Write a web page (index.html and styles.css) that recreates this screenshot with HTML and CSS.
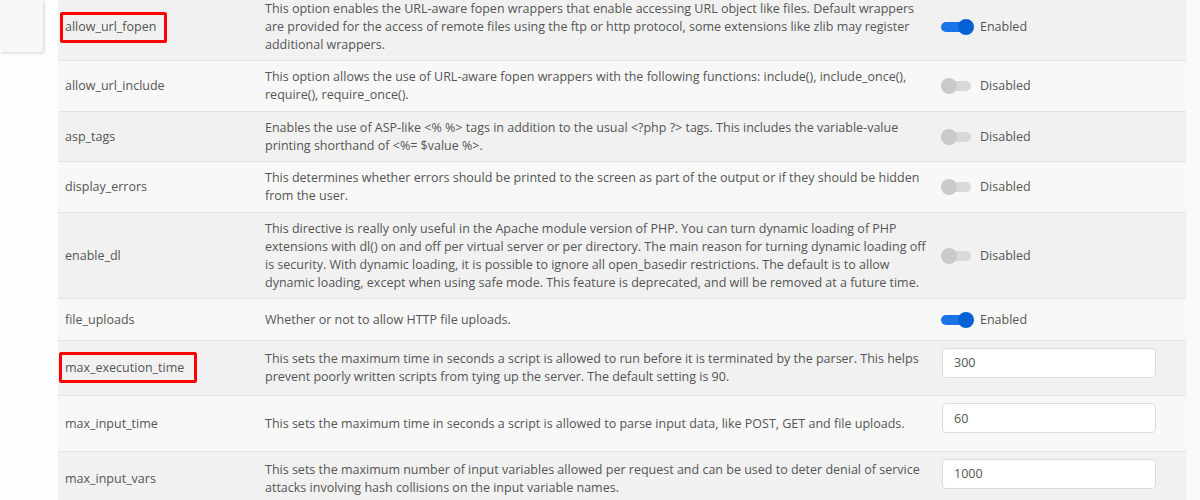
FILE: index.html
```html
<!DOCTYPE html>
<html lang="en">
<head>
<meta charset="utf-8">
<title>PHP Options</title>
<link rel="stylesheet" href="styles.css">
</head>
<body>
<div class="page">
  <aside class="side">
    <div class="side-card"></div>
  </aside>
  <main class="main">
    <table class="opts">
      <tbody>
        <tr class="odd">
          <td class="name"><span class="mark mark-a">allow_url_fopen</span></td>
          <td class="desc">This option enables the URL-aware fopen wrappers that enable accessing URL object like files. Default wrappers are provided for the access of remote files using the ftp or http protocol, some extensions like zlib may register additional wrappers.</td>
          <td class="ctl"><label class="sw on"><span class="track"><span class="knob"></span></span><span class="sw-text">Enabled</span></label></td>
        </tr>
        <tr>
          <td class="name">allow_url_include</td>
          <td class="desc">This option allows the use of URL-aware fopen wrappers with the following functions: include(), include_once(), require(), require_once().</td>
          <td class="ctl"><label class="sw"><span class="track"><span class="knob"></span></span><span class="sw-text">Disabled</span></label></td>
        </tr>
        <tr class="odd">
          <td class="name">asp_tags</td>
          <td class="desc">Enables the use of ASP-like &lt;% %&gt; tags in addition to the usual &lt;?php ?&gt; tags. This includes the variable-value printing shorthand of &lt;%= $value %&gt;.</td>
          <td class="ctl"><label class="sw"><span class="track"><span class="knob"></span></span><span class="sw-text">Disabled</span></label></td>
        </tr>
        <tr>
          <td class="name">display_errors</td>
          <td class="desc">This determines whether errors should be printed to the screen as part of the output or if they should be hidden from the user.</td>
          <td class="ctl"><label class="sw"><span class="track"><span class="knob"></span></span><span class="sw-text">Disabled</span></label></td>
        </tr>
        <tr class="odd">
          <td class="name">enable_dl</td>
          <td class="desc">This directive is really only useful in the Apache module version of PHP. You can turn dynamic loading of PHP extensions with dl() on and off per virtual server or per directory. The main reason for turning dynamic loading off is security. With dynamic loading, it is possible to ignore all open_basedir restrictions. The default is to allow dynamic loading, except when using safe mode. This feature is deprecated, and will be removed at a future time.</td>
          <td class="ctl"><label class="sw"><span class="track"><span class="knob"></span></span><span class="sw-text">Disabled</span></label></td>
        </tr>
        <tr>
          <td class="name">file_uploads</td>
          <td class="desc">Whether or not to allow HTTP file uploads.</td>
          <td class="ctl"><label class="sw on"><span class="track"><span class="knob"></span></span><span class="sw-text">Enabled</span></label></td>
        </tr>
        <tr class="odd">
          <td class="name"><span class="mark mark-b">max_execution_time</span></td>
          <td class="desc">This sets the maximum time in seconds a script is allowed to run before it is terminated by the parser. This helps prevent poorly written scripts from tying up the server. The default setting is 90.</td>
          <td class="ctl"><input class="field" type="text" value="300"></td>
        </tr>
        <tr>
          <td class="name">max_input_time</td>
          <td class="desc">This sets the maximum time in seconds a script is allowed to parse input data, like POST, GET and file uploads.</td>
          <td class="ctl"><input class="field" type="text" value="60"></td>
        </tr>
        <tr class="odd">
          <td class="name">max_input_vars</td>
          <td class="desc">This sets the maximum number of input variables allowed per request and can be used to deter denial of service attacks involving hash collisions on the input variable names.</td>
          <td class="ctl"><input class="field" type="text" value="1000"></td>
        </tr>
      </tbody>
    </table>
  </main>
  <div class="gutter"></div>
</div>
</body>
</html>
```

FILE: styles.css
```css
* { box-sizing: border-box; }
html, body { margin: 0; padding: 0; }
body {
  background: #fcfcfc;
  font-family: "Open Sans", "Liberation Sans", Arial, sans-serif;
  font-size: 12.5px;
  color: #555;
  overflow: hidden;
}
.page {
  display: grid;
  grid-template-columns: 58px 1128px 1fr;
  height: 500px;
}
.side {
  background: #fdfdfd;
}
.side-card {
  width: 43px;
  height: 52px;
  background: #f8f8f8;
  box-shadow: 1px 1px 3px rgba(0, 0, 0, 0.18);
  border-radius: 0 0 2px 0;
}
.main {
  margin-top: -7.5px;
}
.gutter {
  background: #fafafa;
}
.opts {
  width: 100%;
  border-collapse: collapse;
  table-layout: fixed;
}
.opts tr {
  background: #f8f8f8;
  border-bottom: 1px solid #e4e4e4;
}
.opts tr.odd {
  background: #f1f1f1;
}
.opts td {
  padding: 7px 7px 6.5px;
  line-height: 18px;
  vertical-align: middle;
}
.name { width: 200px; }
.desc { width: 676px; }
.ctl { width: 252px; }

.mark {
  position: relative;
  display: inline-block;
}
.mark::after {
  content: "";
  position: absolute;
  border: 3px solid #f00;
  border-radius: 2px;
}
.mark-a::after { left: -5px; right: -11px; top: -6px; bottom: -7px; }
.mark-b::after { left: -6px; right: -13px; top: -7px; bottom: -6px; }

.sw {
  display: flex;
  align-items: center;
  height: 27px;
}
.track {
  position: relative;
  width: 30px;
  height: 10px;
  border-radius: 5px;
  background: #d9d9d9;
}
.knob {
  position: absolute;
  top: 50%;
  left: 0;
  width: 16px;
  height: 16px;
  margin-top: -8px;
  border-radius: 50%;
  background: #cacaca;
}
.sw.on .track { background: #1a73e8; }
.sw.on .knob { left: auto; right: -3px; background: #0562d4; }
.sw-text { color: #555; margin-left: 9px; }

.field {
  display: block;
  width: 214px;
  height: 30px;
  margin: 0 0 11px 1px;
  padding: 0 11px;
  border: 1px solid #dcdcdc;
  border-radius: 4px;
  background: #fff;
  font: inherit;
  color: #555;
}
```
